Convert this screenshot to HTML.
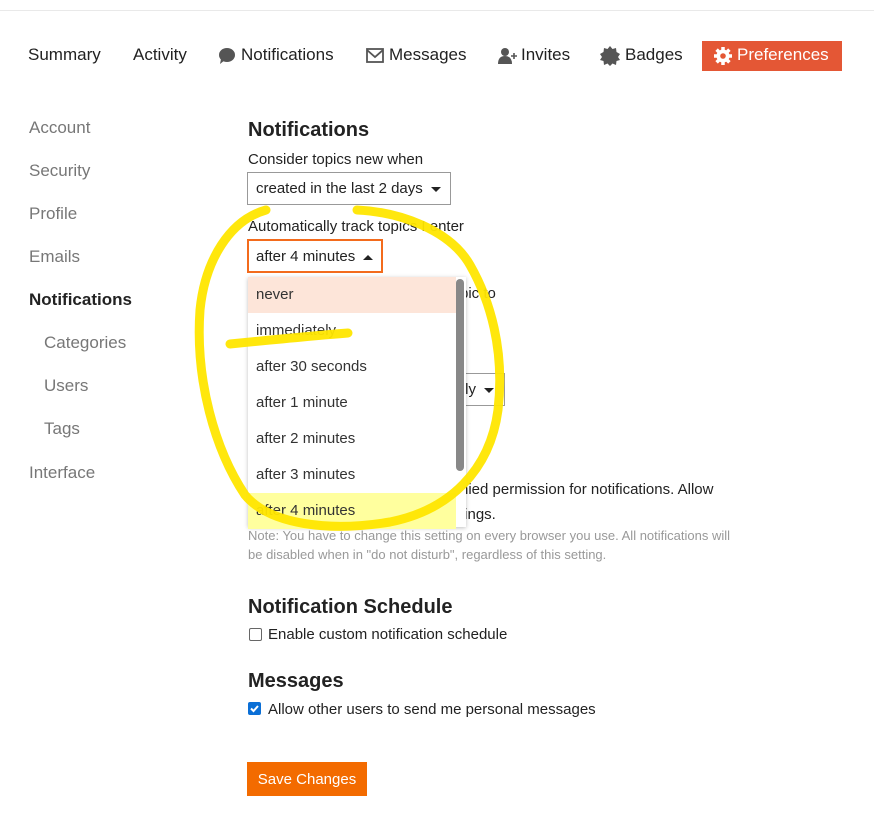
<html><head><style>
body{margin:0;width:874px;height:815px;background:#fff;font-family:"Liberation Sans",Arial,sans-serif;color:#222;position:relative;overflow:hidden}
.a{position:absolute;white-space:nowrap}
.nav{font-size:17px;top:45px}
.side{font-size:17px;color:#777;left:29px}
.h{font-size:20px;font-weight:bold;left:248px}
.l{font-size:15px;left:248px}
.sel{position:absolute;border:1px solid #999;font-size:15px;box-sizing:border-box;padding-left:8px;line-height:31px;background:#fff;white-space:nowrap}
.tri{display:inline-block;width:0;height:0;border-left:5px solid transparent;border-right:5px solid transparent;border-top:5px solid #222;vertical-align:middle;margin-left:8px}
.dd{position:absolute;left:248px;top:277px;width:218px;height:250px;background:#fff;box-shadow:0 1px 4px rgba(0,0,0,.25)}
.dd div{height:36px;line-height:35px;padding-left:8px;font-size:15px;color:#333;width:200px}
</style></head><body>
<div class="a" style="left:0;top:10px;width:874px;height:1px;background:#e9e9e9"></div>
<div class="a nav" style="left:28px">Summary</div>
<div class="a nav" style="left:133px">Activity</div>
<svg class="a" style="left:218px;top:47px" width="18" height="18" viewBox="0 0 18 18"><ellipse cx="9" cy="8" rx="8" ry="7" fill="#555"/><path d="M3 12 L2 17 L7 13Z" fill="#555"/></svg>
<div class="a nav" style="left:241px">Notifications</div>
<svg class="a" style="left:366px;top:48px" width="18" height="15"><rect x="1" y="1" width="16" height="13" fill="none" stroke="#555" stroke-width="1.8"/><path d="M1 2 L9 9 L17 2" fill="none" stroke="#555" stroke-width="1.8"/></svg>
<div class="a nav" style="left:389px">Messages</div>
<svg class="a" style="left:498px;top:47px" width="20" height="18"><circle cx="7" cy="5" r="4" fill="#555"/><path d="M0 17 Q0 9 7 9 Q14 9 14 17Z" fill="#555"/><path d="M16 6v6M13 9h6" stroke="#555" stroke-width="1.6"/></svg>
<div class="a nav" style="left:521px">Invites</div>
<svg class="a" style="left:600px;top:46px" width="20" height="20" viewBox="0 0 20 20"><polygon points="10,0 12.5,3 16,2 16.5,6 20,8 18,11 20,14 16.5,15 16,19 12.5,17.5 10,20 7.5,17.5 4,19 3.5,15 0,14 2,11 0,8 3.5,6 4,2 7.5,3" fill="#555"/></svg>
<div class="a nav" style="left:625px">Badges</div>
<div class="a" style="left:702px;top:41px;width:140px;height:30px;background:#e45735"></div>
<svg class="a" style="left:714px;top:47px" width="18" height="18" viewBox="0 0 18 18"><circle cx="9" cy="9" r="6.5" fill="#fff"/><g stroke="#fff" stroke-width="3.5"><path d="M9 0v18M0 9h18M2.6 2.6l12.8 12.8M15.4 2.6L2.6 15.4"/></g><circle cx="9" cy="9" r="2.8" fill="#e45735"/></svg>
<div class="a nav" style="left:737px;color:#fff">Preferences</div>

<div class="a side" style="top:118px">Account</div>
<div class="a side" style="top:161px">Security</div>
<div class="a side" style="top:204px">Profile</div>
<div class="a side" style="top:247px">Emails</div>
<div class="a side" style="top:290px;color:#222;font-weight:bold">Notifications</div>
<div class="a side" style="top:333px;left:44px">Categories</div>
<div class="a side" style="top:376px;left:44px">Users</div>
<div class="a side" style="top:419px;left:44px">Tags</div>
<div class="a side" style="top:463px">Interface</div>

<div class="a h" style="top:119px">Notifications</div>
<div class="a l" style="top:151px">Consider topics new when</div>
<div class="sel" style="left:247px;top:172px;width:204px;height:33px;line-height:32px">created in the last 2 days<span class="tri"></span></div>
<div class="a l" style="top:218px">Automatically track topics I enter</div>
<div class="sel" style="left:247px;top:239px;width:136px;height:34px;border:2px solid #f36b1c;padding-left:7px;line-height:32px">after 4 minutes<span class="tri" style="border-top:0;border-bottom:5px solid #222"></span></div>
<div class="a l" style="top:285px;left:460px">pic to</div>
<div class="sel" style="left:400px;top:373px;width:105px;height:33px;text-align:right;padding-right:10px">ly<span class="tri"></span></div>
<div class="a l" style="top:481px;left:460px">nied permission for notifications. Allow</div>
<div class="a l" style="top:506px;left:460px">tings.</div>
<div class="a" style="left:248px;top:526px;font-size:13px;color:#999;line-height:19px">Note: You have to change this setting on every browser you use. All notifications will<br>be disabled when in "do not disturb", regardless of this setting.</div>

<div class="dd">
<div style="background:#fde5d9">never</div>
<div>immediately</div>
<div>after 30 seconds</div>
<div>after 1 minute</div>
<div>after 2 minutes</div>
<div>after 3 minutes</div>
<div style="background:#ffff9e">after 4 minutes</div>
<span style="position:absolute;left:208px;top:2px;width:8px;height:192px;border-radius:4px;background:#888"></span>
</div>

<div class="a h" style="top:596px">Notification Schedule</div>
<div class="a l" style="top:626px;left:268px">Enable custom notification schedule</div>
<div class="a" style="left:249px;top:628px;width:11px;height:11px;border:1px solid #666;border-radius:2px"></div>
<div class="a h" style="top:670px">Messages</div>
<div class="a l" style="top:701px;left:268px">Allow other users to send me personal messages</div>
<svg class="a" style="left:248px;top:702px" width="13" height="13"><rect width="13" height="13" rx="2" fill="#0b6fd6"/><path d="M3 6.5l2.5 2.5L10 4" fill="none" stroke="#fff" stroke-width="2"/></svg>
<div class="a" style="left:247px;top:762px;width:120px;height:34px;background:#f36b00;color:#fff;font-size:15px;line-height:35px;text-align:center">Save Changes</div>

<svg class="a" style="left:0;top:0" width="874" height="815"><g fill="none" stroke="#ffe600" stroke-width="9" stroke-linecap="round" opacity="0.95">
<path d="M266 210 C230 220 205 260 200 310 C195 380 215 450 245 495 C270 525 330 532 390 522 C450 510 490 470 498 410 C505 350 490 300 470 265 C450 230 400 212 357 210"/>
<path d="M230 344 C270 340 310 336 348 333"/></g></svg>
</body></html>
